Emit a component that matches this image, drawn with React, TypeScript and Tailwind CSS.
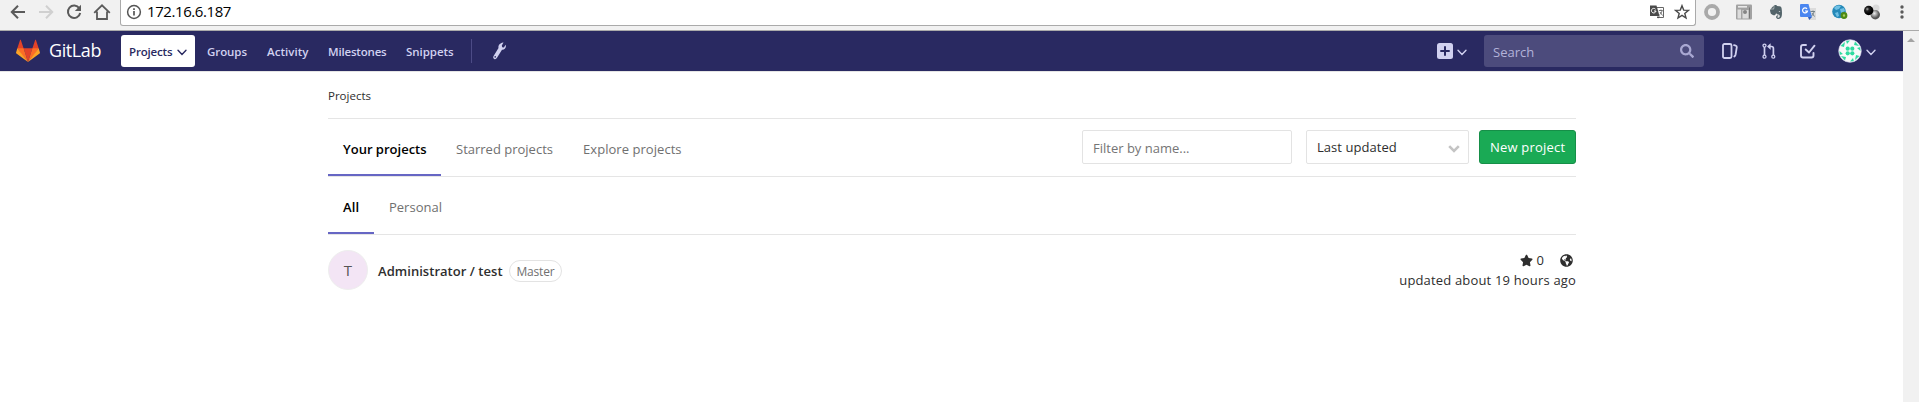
import React from "react";
import { FaStar, FaWrench, FaSearch, FaGlobeAmericas, FaEvernote } from "react-icons/fa";

const Chevron = ({ className }: { className: string }) => (
  <svg viewBox="0 0 10 7" className={className} fill="none" stroke="currentColor" strokeWidth="1.4" strokeLinecap="round">
    <path d="M1 1.2 5 5.4 9 1.2" />
  </svg>
);

const Tanuki = () => (
  <svg viewBox="0 0 36 36" className="h-6 w-6">
    <path fill="#e24329" d="M2 14l9.38 9v-9l-4-12.28c-.205-.632-1.176-.632-1.38 0z" />
    <path fill="#e24329" d="M34 14l-9.38 9v-9l4-12.28c.205-.632 1.176-.632 1.38 0z" />
    <path fill="#e24329" d="M18 34.38 11.38 14h13.24z" />
    <path fill="#fc6d26" d="M18 34.38 11.38 14H2l6 9z" />
    <path fill="#fc6d26" d="M18 34.38 24.62 14H34l-6 9z" />
    <path fill="#fca326" d="M2 14 .1 20.16c-.18.565 0 1.2.5 1.56l17.42 12.66z" />
    <path fill="#fca326" d="m34 14 1.9 6.16c.18.565 0 1.2-.5 1.56L18 34.38z" />
  </svg>
);

const Avatar = () => (
  <svg viewBox="0 0 24 24" className="h-6 w-6">
    <defs>
      <clipPath id="round"><circle cx="12" cy="12" r="11.2" /></clipPath>
    </defs>
    <g clipPath="url(#round)">
      <rect width="24" height="24" fill="#f8fafa" />
      <g fill="#2fdba0">
        <circle cx="9.7" cy="9.7" r="2.1" /><circle cx="14.3" cy="9.7" r="2.1" />
        <circle cx="9.7" cy="14.3" r="2.1" /><circle cx="14.3" cy="14.3" r="2.1" />
        <path d="M8 1.5h4L9 5zM17 2.500l4 4.500-5-1zM22.500 8v4L19 9zM21.500 17l-4.500 4 1-5zM16 22.500h-4l3-3.500zM7 21.500 3 17l5 1zM1.500 16v-4L5 15zM2.500 7 7 3 6 8z" />
      </g>
    </g>
    <circle cx="12" cy="12" r="11.300" fill="none" stroke="#d7d5ee" strokeWidth=".7" />
  </svg>
);

function BrowserBar() {
  return (
    <div className="flex h-[31px] items-start border-b border-[#aaaaaa] bg-[#f1f1f1]">
      <div className="flex h-6 w-[120px] items-center pl-[10px] text-[#5a5a5a]">
        <svg viewBox="0 0 16 16" className="h-4 w-4" fill="none" stroke="currentColor" strokeWidth="2"><path d="M15 8H2.500M8 1.800 1.800 8 8 14.200" /></svg>
        <svg viewBox="0 0 16 16" className="ml-3 h-4 w-4 text-[#d0d0d0]" fill="none" stroke="currentColor" strokeWidth="2"><path d="M1 8h12.500M8 1.800 14.200 8 8 14.200" /></svg>
        <svg viewBox="0 0 16 16" className="ml-3 h-4 w-4" fill="none" stroke="currentColor" strokeWidth="2"><path d="M13.300 4.300A6.200 6.200 0 1 0 14.200 9" /><path fill="currentColor" stroke="none" d="M15 .8V7H8.800z" /></svg>
        <svg viewBox="0 0 18 16" className="ml-[11px] h-4 w-[18px]" fill="none" stroke="currentColor" strokeWidth="1.800"><path d="M1.200 8.800 9 1.300l7.800 7.500M4 7.500V15h10V7.500" /></svg>
      </div>
      <div className="flex h-[26px] w-[1576px] items-center rounded-b-[3px] border border-t-0 border-[#aaaaaa] bg-white pb-[1px] pl-[5px] pr-[5px]">
        <svg viewBox="0 0 16 16" className="h-4 w-4 text-[#555555]" fill="none" stroke="currentColor" strokeWidth="1.500"><circle cx="8" cy="8" r="6.400" /><path d="M8 7v4.500M8 4.300v1.600" strokeWidth="1.700" /></svg>
        <span className="ml-[5px] pb-[2px] text-[15px] leading-[22px] tracking-[-0.42px] text-black">172.16.6.187</span>
        <div className="ml-auto flex items-center text-[#4a4a4a]">
          <svg viewBox="0 0 16 16" className="h-4 w-4">
            <path fill="#fff" stroke="#666" d="M7 3.500h7.500v10H8" />
            <path fill="#4a4a4a" d="M1 1.500h6.500l3 10.500H1zM8 12.500h3l-2 2z" />
            <path d="M6.500 5.200A2.300 2.300 0 1 0 7 7H5" fill="none" stroke="#fff" strokeWidth="1" />
            <path d="M9.800 6.500h4M12 5.500v1M13 7c-.5 2-1.500 3-2.500 3.800M11 8l2.500 3.500" fill="none" stroke="#666" strokeWidth=".9" />
          </svg>
          <svg viewBox="0 0 16 16" className="ml-[9px] h-4 w-4" fill="none" stroke="currentColor" strokeWidth="1.400"><path d="m8 1.700 1.700 4.400 4.700.3-3.600 3 1.200 4.600-4-2.600L4 14l1.200-4.600-3.600-3 4.700-.3z" /></svg>
        </div>
      </div>
      <div className="flex h-6 items-center gap-4 pl-2">
        <svg viewBox="0 0 16 16" className="h-4 w-4"><circle cx="8" cy="8" r="6" fill="none" stroke="#a9a9a9" strokeWidth="3.800" /></svg>
        <svg viewBox="0 0 16 16" className="h-4 w-4">
          <rect x="0" y=".5" width="16" height="15" rx="1" fill="#a2a2a2" />
          <path d="M2 2.800h9" stroke="#eee" strokeWidth="1.500" />
          <path d="M1.500 5.500H5v9H1.500zM6.500 6h6v8.500h-6z" fill="#dcdcdc" /><circle cx="9" cy="8" r="2" fill="#858585" /><path d="M13.500 3.500v11" stroke="#777" />
        </svg>
        <FaEvernote className="h-4 w-4 text-[#53646a]" />
        <svg viewBox="0 0 16 16" className="h-4 w-4">
          <path d="M6 4h10v12H9z" fill="#dcdcdc" /><path d="M0 1a1 1 0 0 1 1-1h7.500L12 13H1a1 1 0 0 1-1-1z" fill="#4a86f0" /><path d="M8 13h4l-2.800 3z" fill="#3060c0" />
          <path d="M7 4.800A2.500 2.500 0 1 0 7.500 7H5" fill="none" stroke="#fff" strokeWidth="1.200" />
          <path d="M10.500 7.500H15M13 6.500v1M14 8c-.5 2-1.500 3-2.500 4M12 9l2.500 3.500" fill="none" stroke="#687880" strokeWidth=".9" />
        </svg>
        <svg viewBox="0 0 16 16" className="h-4 w-4">
          <circle cx="7" cy="7.500" r="6.800" fill="#2589b8" /><path d="M2 4c2-3 5-3 7-2L7 5 4 6zM8 5l4-1 1 3-4 2zM3 9l3-1 1 4-2 1z" fill="#6fc0e4" />
          <circle cx="12" cy="11.500" r="2.300" fill="#a8cc60" stroke="#4d8a15" strokeWidth="2.200" />
        </svg>
        <svg viewBox="0 0 16 16" className="h-4 w-4">
          <defs>
            <radialGradient id="dark" cx=".35" cy=".35"><stop offset="0" stopColor="#aaa" /><stop offset=".4" stopColor="#222" /><stop offset="1" stopColor="#000" /></radialGradient>
            <radialGradient id="grey" cx=".4" cy=".35"><stop offset="0" stopColor="#eee" /><stop offset="1" stopColor="#555" /></radialGradient>
          </defs>
          <circle cx="12" cy="4" r="3.500" fill="#dadada" /><circle cx="11.300" cy="10.800" r="4.700" fill="url(#grey)" /><circle cx="4.700" cy="6.500" r="4.700" fill="url(#dark)" />
        </svg>
        <svg viewBox="0 0 4 14" className="ml-1 h-[14px] w-1" fill="#5a5a5a"><circle cx="2" cy="2" r="1.700" /><circle cx="2" cy="7" r="1.700" /><circle cx="2" cy="12" r="1.700" /></svg>
      </div>
    </div>
  );
}

function NavBar() {
  return (
    <nav className="flex h-10 items-center bg-[#292961] pl-4 text-[11.500px] font-semibold text-[#d1d1f0]">
      <Tanuki />
      <span className="ml-[9px] w-[72px] pb-px text-[18px] font-normal tracking-[-0.41px] text-white">GitLab</span>
      <div className="flex h-8 w-[74px] items-center rounded-[3px] bg-white pl-2 text-[#292961]">
        <span className="w-[48px] pt-[2px] tracking-[-0.18px]">Projects</span>
        <Chevron className="mt-[2px] h-[7px] w-[10px]" />
      </div>
      <span className="ml-3 w-[60px] pt-[2px] tracking-[-0.080px]">Groups</span>
      <span className="w-[61px] pt-[2px] tracking-[0.040px]">Activity</span>
      <span className="w-[78px] pt-[2px] tracking-[-0.180px]">Milestones</span>
      <span className="w-[65px] pt-[2px] tracking-[-0.040px]">Snippets</span>
      <div className="h-6 w-px bg-[#4c4b86]" />
      <svg viewBox="0 0 13 18" className="ml-[21px] h-[18px] w-[13px]" fill="currentColor"><path d="M8 1.200C9 .6 9.700.4 10.500.6L8.800 3.400l.4 1.800 1.700.2 1.700-2.600c.6 1.500.300 3-.8 4-.8.800-1.800 1.100-2.800.9L4 15.800c-.8 1.300-1.800 1.600-2.800 1.100S-.2 15.200.6 13.900L5.500 6C5 4 6 2.200 8 1.200z" /><circle cx="2.200" cy="14.900" r=".8" fill="#292961" /></svg>
      <div className="ml-auto flex items-center">
        <svg viewBox="0 0 16 16" className="h-4 w-4"><rect width="16" height="16" rx="2.500" fill="currentColor" /><path d="M8 3.300v9.400M3.300 8h9.400" stroke="#292961" strokeWidth="2" /></svg>
        <Chevron className="ml-1 mt-[2px] h-[7px] w-[10px]" />
        <div className="ml-[17px] flex h-8 w-[220px] items-center justify-between rounded-[3px] bg-[#4c4b7c] pl-[9px] pr-[10px] text-[13px] font-normal text-[#b3b3d9]">
          <span className="pt-[3px]">Search</span>
          <FaSearch className="h-[14px] w-[14px] text-[#a9a8d2]" />
        </div>
        <svg viewBox="0 0 16 16" className="ml-[18px] h-4 w-4" fill="none" stroke="currentColor" strokeWidth="1.800" strokeLinecap="round"><rect x="1" y="1" width="8.500" height="14" rx="1.500" /><path d="M12 2.200l1.700.4c.8.200 1.200.7 1.100 1.500L13.600 11.500c-.2 1-.6 1.500-1.300 2" /></svg>
        <svg viewBox="0 0 14 16" className="ml-[24px] h-4 w-[14px]" fill="none" stroke="currentColor" strokeWidth="1.300"><circle cx="2.500" cy="2.600" r="1.500" /><circle cx="2.500" cy="13.700" r="1.500" /><circle cx="11.300" cy="13.700" r="1.500" /><path d="M2.500 4v8M7.500 3.500h2c1.200 0 1.900.7 1.900 1.900V12" strokeWidth="1.700" /><path d="M8.600.2v6.600L5 3.500z" fill="currentColor" stroke="none" /></svg>
        <svg viewBox="0 0 16 16" className="ml-6 h-4 w-4" fill="none" stroke="currentColor" strokeWidth="1.900" strokeLinecap="round" strokeLinejoin="round"><path d="M6 2H3C1.700 2 1 2.700 1 4v8.500c0 1.300.7 2 2 2h8.500c1.300 0 2-.7 2-2V10M5.700 6.500 9 9.500l5.500-6.800" /></svg>
        <span className="ml-[22px]"><Avatar /></span>
        <Chevron className="ml-1 mr-[27px] mt-[2px] h-[7px] w-[10px]" />
      </div>
    </nav>
  );
}

export default function App() {
  return (
    <div className="flex h-[402px] w-[1919px] flex-col overflow-hidden bg-white font-['Open_Sans',sans-serif] text-[13px] text-[#2e2e2e]">
      <BrowserBar />
      <div className="flex flex-1">
        <div className="w-[1903px]">
          <NavBar />
          <div className="border-t border-[#e5e5e5] pl-[328px]">
            <div className="w-[1248px]">
              <div className="flex h-[47px] items-center border-b border-[#e5e5e5] pt-[2px] text-[11.500px]"><span>Projects</span></div>
              <div className="flex h-[58px] border-b border-[#e5e5e5] text-[#707070]">
                <div className="flex h-[57px] w-[113px] items-center border-b-2 border-[#6666c4] pl-[15px] pt-[6px] font-semibold text-black">Your projects</div>
                <div className="flex h-[57px] w-[128px] items-center pb-[2px] pl-[15px] pt-[6px]">Starred projects</div>
                <div className="flex h-[57px] w-[128px] items-center pb-[2px] pl-[14px] pt-[6px] tracking-[0.050px]">Explore projects</div>
                <div className="ml-auto flex items-start pt-[11px]">
                  <div className="flex h-[34px] w-[210px] items-center rounded-[2px] border border-[#e3e3e3] pl-[10px] pt-[4px] text-[#757575]">Filter by name...</div>
                  <div className="ml-[14px] flex h-[34px] w-[163px] items-center justify-between rounded-[2px] border border-[#e3e3e3] pl-[10px] pr-[8px] text-[#2e2e2e]">
                    <span className="pt-[2px] tracking-[0.050px]">Last updated</span>
                    <svg viewBox="0 0 12 8" className="mt-[3px] h-2 w-3" fill="none" stroke="#c4c4c4" strokeWidth="2.600"><path d="M1.200 1.200 6 6l4.800-4.800" /></svg>
                  </div>
                  <div className="ml-[10px] flex h-[34px] w-[97px] items-center rounded-[3px] border border-[#168f48] bg-[#1aaa55] pl-[10px] pt-[2px] tracking-[0.200px] text-white">New project</div>
                </div>
              </div>
              <div className="flex h-[58px] border-b border-[#e5e5e5] text-[#707070]">
                <div className="flex h-[57px] w-[46px] items-center border-b-2 border-[#6666c4] pl-[15px] pt-[6px] font-semibold tracking-[0.200px] text-black">All</div>
                <div className="flex h-[57px] items-center pb-[2px] pl-[15px] pt-[6px]">Personal</div>
              </div>
              <div className="flex h-[70px] items-center">
                <div className="flex h-10 w-10 items-center justify-center rounded-full border border-[#eeeeee] bg-[#f3e5f5] text-[15px] text-[#555555]">T</div>
                <span className="ml-[10px] w-[131px] pt-[3px] font-semibold tracking-[0.040px]">Administrator / test</span>
                <div className="mt-[2px] flex h-[22px] w-[53px] items-center justify-center rounded-full border border-[#e3e3e3] pt-px text-[12px] tracking-[-0.180px] text-[#707070]">Master</div>
                <div className="ml-auto flex flex-col items-end">
                  <div className="flex h-5 items-center pr-[3px]">
                    <FaStar className="h-[13px] w-[13px]" />
                    <span className="ml-1 pt-px">0</span>
                    <FaGlobeAmericas className="ml-[16px] h-[13px] w-[13px]" />
                  </div>
                  <div className="flex h-5 items-center pt-[2px] tracking-[0.170px]">updated about 19 hours ago</div>
                </div>
              </div>
            </div>
          </div>
        </div>
        <div className="flex w-4 justify-center bg-[#f1f1f1] pt-[7px]">
          <svg viewBox="0 0 8 4" className="h-1 w-2"><path d="M4 0l4 4H0z" fill="#a3a3a3" /></svg>
        </div>
      </div>
    </div>
  );
}
